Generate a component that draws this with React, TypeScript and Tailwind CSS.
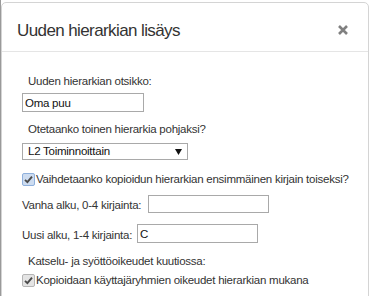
import React from "react";

function Check({ focused }: { focused?: boolean }) {
  return (
    <span
      className={
        focused
          ? "shrink-0 w-[13px] h-[13px] rounded-[2px] border border-[#8fb0dc] bg-[#cddcf0] flex items-center justify-center"
          : "shrink-0 w-[13px] h-[13px] rounded-[2px] border border-[#b5b5b5] bg-[#e4e4e4] flex items-center justify-center"
      }
    >
      <svg width="9" height="9" viewBox="0 0 9 9">
        <path d="M1 4.8 L3.4 7.2 L8 1.6" stroke="#4a4a4a" strokeWidth="1.9" fill="none" />
      </svg>
    </span>
  );
}

export default function App() {
  const font = { fontFamily: '"Liberation Sans", Arial, sans-serif' };
  return (
    <div className="w-[371px] h-[296px] bg-white border-l border-[#9a9a9a] overflow-hidden relative" style={font}>
      <div className="absolute left-[0px] top-[2px] w-[368px] h-[300px] bg-white rounded-t-[5px] border border-[#d4d4d4]">
        <div className="h-[49px] pt-[18px] flex items-start justify-between pl-[15px] pr-[20px] border-b border-[#e5e5e5]">
          <div className="text-[17px] leading-[20px] text-[#333] tracking-[-0.6px]">Uuden hierarkian lisäys</div>
          <svg width="10" height="10" viewBox="0 0 10 10" className="mt-[4px]">
            <path d="M1 1 L9 9 M9 1 L1 9" stroke="#808080" strokeWidth="2.6" />
          </svg>
        </div>
        <div className="pl-[20px] pt-[20px] text-[11.5px] tracking-[-0.25px] text-[#333] flex flex-col whitespace-nowrap">
          <div className="pl-[6px] h-[18px] leading-[18px]">Uuden hierarkian otsikko:</div>
          <input
            defaultValue="Oma puu"
            className="mt-[3px] w-[122px] h-[19px] border border-[#a9a9a9] px-[2px] text-[11.5px] tracking-[-0.25px] text-[#111] outline-none"
          />
          <div className="pl-[6px] mt-[8px] h-[18px] leading-[18px]">Otetaanko toinen hierarkia pohjaksi?</div>
          <div className="mt-[5px] w-[166px] h-[17px] border border-[#a9a9a9] flex items-center justify-between pl-[5px] pr-[5px] text-[#111]">
            <span className="leading-[15px]">L2 Toiminnoittain</span>
            <svg width="7" height="6" viewBox="0 0 7 6">
              <path d="M0 0 H7 L3.5 6 Z" fill="#111" />
            </svg>
          </div>
          <label className="mt-[11px] flex items-center h-[16px]">
            <Check focused />
            <span className="ml-[1px] leading-[16px]">Vaihdetaanko kopioidun hierarkian ensimmäinen kirjain toiseksi?</span>
          </label>
          <div className="mt-[8px] flex items-start h-[18px]">
            <span className="mt-[1px] leading-[18px]">Vanha alku, 0-4 kirjainta:</span>
            <input className="ml-[7px] w-[121px] h-[18px] border border-[#a9a9a9] outline-none" />
          </div>
          <div className="mt-[11px] flex items-start h-[18px]">
            <span className="mt-[2px] leading-[18px]">Uusi alku, 1-4 kirjainta:</span>
            <input
              defaultValue="C"
              className="ml-[5px] w-[121px] h-[19px] border border-[#a9a9a9] px-[2px] text-[11.5px] text-[#111] outline-none"
            />
          </div>
          <div className="pl-[6px] mt-[10px] h-[18px] leading-[18px]">Katselu- ja syöttöoikeudet kuutiossa:</div>
          <label className="mt-[2px] flex items-center h-[16px]">
            <Check />
            <span className="ml-[1px] leading-[16px]">Kopioidaan käyttajäryhmien oikeudet hierarkian mukana</span>
          </label>
        </div>
      </div>
    </div>
  );
}
